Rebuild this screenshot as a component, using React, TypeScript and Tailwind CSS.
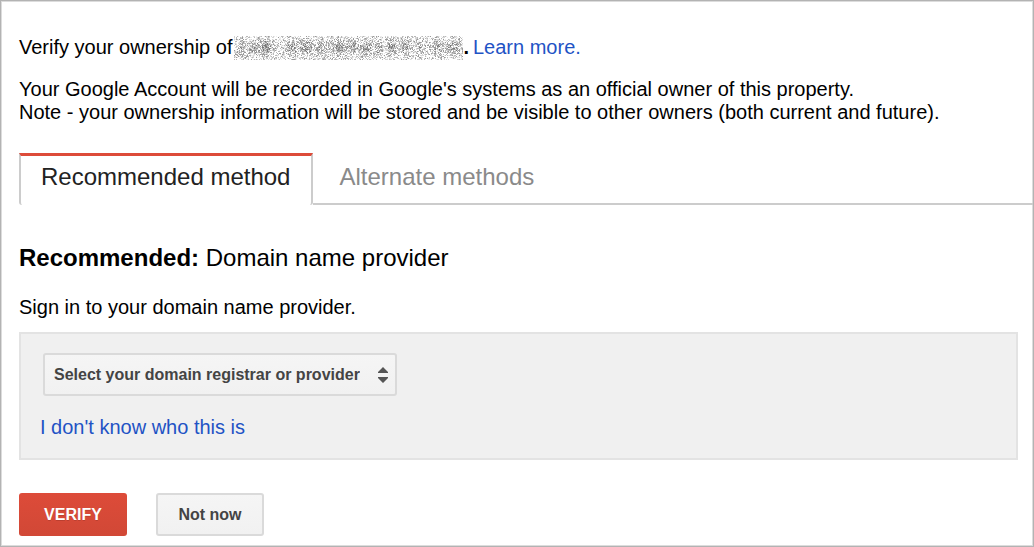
import React from "react";

const MASK_WIDTH = 229;
const MASK_HEIGHT = 24;
const SHADES = ["#ededed", "#d6d6d6", "#b8b8b8", "#999999", "#777777"];

// Centre, half width and strength of the darker clumps in the hidden address.
const CLUMPS: [number, number, number][] = [
  [8, 6, 0.6],
  [20, 7, 0.8],
  [32, 7, 1],
  [58, 7, 0.8],
  [72, 8, 0.9],
  [86, 5, 0.7],
  [104, 8, 1],
  [118, 6, 0.8],
  [132, 7, 0.9],
  [144, 5, 0.7],
  [158, 6, 0.9],
  [171, 5, 0.8],
  [186, 4, 0.6],
  [204, 7, 0.7],
  [219, 7, 0.8],
];

function buildGrain(): string[] {
  const paths = SHADES.map(() => "");
  let seed = 20477;
  const random = () => {
    seed = (seed * 16807) % 2147483647;
    return seed / 2147483647;
  };
  for (let y = 0; y < MASK_HEIGHT; y++) {
    const row = Math.exp(-(((y - 11) / 7) ** 2));
    for (let x = 0; x < MASK_WIDTH; x++) {
      let clump = 0;
      for (const [centre, spread, strength] of CLUMPS) {
        clump = Math.max(clump, strength * Math.exp(-(((x - centre) / spread) ** 2)));
      }
      const weight = clump * row;
      if (random() < 0.5 + 0.5 * weight) {
        const level = Math.min(4, Math.floor(random() * (3.3 + 0.7 * weight) + 1.3 * weight));
        paths[level] += `M${x} ${y}h1v1h-1z`;
      }
    }
  }
  return paths;
}

const GRAIN = buildGrain();

function HiddenAddress() {
  return (
    <svg
      role="img"
      aria-label="Hidden site address"
      width={MASK_WIDTH}
      height={MASK_HEIGHT}
      viewBox="0 0 229 24"
      shapeRendering="crispEdges"
      className="shrink-0"
    >
      {GRAIN.map((d, i) => (
        <path key={SHADES[i]} d={d} fill={SHADES[i]} />
      ))}
    </svg>
  );
}

export default function App() {
  return (
    <main className="min-h-screen border border-[#b3b3b3] bg-white pt-[34px] pb-2 pl-[18px] font-['Liberation_Sans',Arial,sans-serif] text-[20px] leading-[23px] text-black inset-ring inset-ring-[#dcdcdc]">
      <div className="flex h-[25px] items-center">
        <span className="mr-0.5">Verify your ownership of</span>
        <HiddenAddress />
        <b>.</b>
        <a href="#learn" className="ml-1 text-[#1f53c5]">
          Learn more.
        </a>
      </div>

      <p className="mt-[18px]">
        Your Google Account will be recorded in Google's systems as an official owner of this property.
        <br />
        Note - your ownership information will be stored and be visible to other owners (both current and future).
      </p>

      <div role="tablist" className="mt-[29px] flex h-[52px] items-stretch text-[24px] leading-7">
        <button
          type="button"
          role="tab"
          aria-selected="true"
          className="rounded-b-[3px] border-x-2 border-t-3 border-x-[#ccc] border-t-[#dd4b39] pr-[21px] pb-2 pl-5 text-[#222]"
        >
          Recommended method
        </button>
        <div className="flex flex-1 border-b-2 border-[#ccc] pt-[3px] pl-[26px]">
          <button type="button" role="tab" aria-selected="false" className="pb-[6px] text-[#8a8a8a]">
            Alternate methods
          </button>
        </div>
      </div>

      <div className="mr-[15px]">
        <h2 className="mt-[39px] text-[24px] leading-7">
          <b>Recommended:</b> Domain name provider
        </h2>
        <p className="mt-6">Sign in to your domain name provider.</p>

        <section className="mt-[13px] border-2 border-[#e3e3e3] bg-[#f0f0f0] px-[19px] pt-[19px] pb-[19px]">
          <div className="relative ml-[3px] w-fit">
            <select
              aria-label="Domain registrar or provider"
              className="h-[43px] appearance-none rounded-[3px] border-2 border-[#dadada] bg-linear-to-b from-[#f5f5f5] to-[#f1f1f1] pr-[35px] pl-[9px] text-[16px] font-bold text-[#444]"
            >
              <option>Select your domain registrar or provider</option>
            </select>
            <svg
              aria-hidden="true"
              width="10"
              height="16"
              viewBox="0 0 10 16"
              className="pointer-events-none absolute top-[14px] right-[9px]"
              fill="#555"
            >
              <path d="M5 0L10 5V6H0V5zM0 10H10V11L5 16L0 11z" />
            </svg>
          </div>
          <a href="#unknown" className="mt-5 block w-fit text-[#1f53c5]">
            I don't know who this is
          </a>
        </section>

        <div className="mt-[33px] flex gap-[29px] text-[16px] font-bold">
          <button
            type="button"
            className="h-[43px] w-[108px] rounded-[3px] bg-linear-to-b from-[#dd4b39] to-[#d14836] text-white text-shadow-[0_1px_rgb(0_0_0/0.15)]"
          >
            VERIFY
          </button>
          <button
            type="button"
            className="h-[43px] w-[108px] rounded-[3px] border-2 border-[#dadada] bg-linear-to-b from-[#f5f5f5] to-[#f1f1f1] text-[#444]"
          >
            Not now
          </button>
        </div>
      </div>
    </main>
  );
}
